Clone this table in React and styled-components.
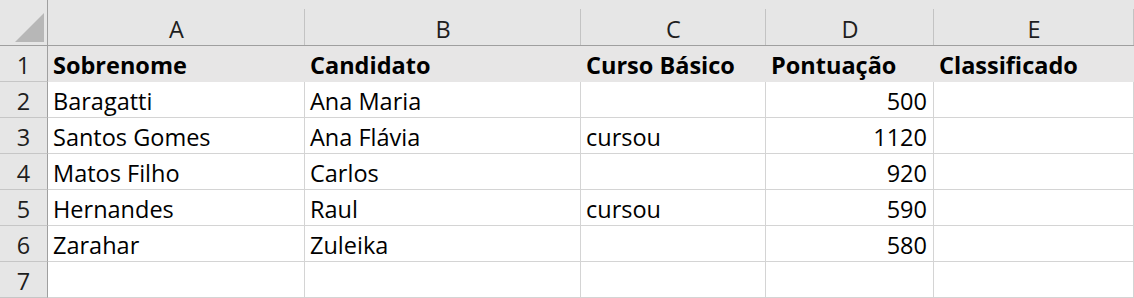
import React from 'react'
import styled, { createGlobalStyle } from 'styled-components'

const GlobalStyle = createGlobalStyle`
  html, body {
    margin: 0;
    padding: 0;
    background: #ffffff;
  }
  body {
    font-family: "Open Sans", "Liberation Sans", sans-serif;
    font-size: 23.5px;
    color: #000;
  }
`

const Sheet = styled.div`
  display: grid;
  grid-template-columns: 48px 257px 276px 185px 168px 1fr;
  grid-auto-rows: 36px;
  grid-template-rows: 46px;
  width: 1134px;
  height: 298px;
  overflow: hidden;
  background: #fff;
`

const Corner = styled.div`
  position: relative;
  background: #e6e6e6;
  border-right: 1px solid #9f9f9f;
  border-bottom: 1px solid #9f9f9f;
  svg {
    position: absolute;
    left: 15px;
    top: 13px;
  }
`

const ColHead = styled.div`
  position: relative;
  background: #e6e6e6;
  border-bottom: 1px solid #9f9f9f;
  display: flex;
  align-items: flex-end;
  justify-content: center;
  padding-bottom: 4px;
  color: #1e1e1e;
  line-height: 1;
  &::after {
    content: '';
    position: absolute;
    right: 0;
    top: 9px;
    bottom: 0;
    width: 1px;
    background: #c3c3c3;
  }
`

const RowHead = styled.div`
  background: #e6e6e6;
  border-right: 1px solid #9f9f9f;
  border-bottom: 1px solid #c6c6c6;
  display: flex;
  align-items: flex-end;
  justify-content: center;
  padding-bottom: 4px;
  color: #1e1e1e;
  line-height: 1;
`

const Cell = styled.div`
  background: ${p => (p.$fill ? '#e7e6e6' : '#fff')};
  border-right: 1px solid ${p => (p.$fill ? '#e7e6e6' : '#d4d4d4')};
  border-bottom: 1px solid ${p => (p.$fill ? '#e7e6e6' : '#d4d4d4')};
  display: flex;
  align-items: flex-end;
  justify-content: ${p => (p.$num ? 'flex-end' : 'flex-start')};
  padding: 0 6px 4px 5px;
  font-weight: ${p => (p.$bold ? 700 : 400)};
  white-space: nowrap;
  overflow: hidden;
  line-height: 1;
`

const cols = ['A', 'B', 'C', 'D', 'E']

const rows = [
  ['Sobrenome', 'Candidato', 'Curso Básico', 'Pontuação', 'Classificado'],
  ['Baragatti', 'Ana Maria', '', 500, ''],
  ['Santos Gomes', 'Ana Flávia', 'cursou', 1120, ''],
  ['Matos Filho', 'Carlos', '', 920, ''],
  ['Hernandes', 'Raul', 'cursou', 590, ''],
  ['Zarahar', 'Zuleika', '', 580, ''],
  ['', '', '', '', ''],
]

export default function App() {
  return (
    <>
      <GlobalStyle />
      <Sheet>
        <Corner>
          <svg width="30" height="30" viewBox="0 0 30 30">
            <polygon points="29,0 29,29 0,29" fill="#b7b7b7" />
          </svg>
        </Corner>
        {cols.map(c => (
          <ColHead key={c}>{c}</ColHead>
        ))}
        {rows.map((r, i) => (
          <React.Fragment key={i}>
            <RowHead>{i + 1}</RowHead>
            {r.map((v, j) => (
              <Cell
                key={j}
                $fill={i === 0}
                $bold={i === 0}
                $num={typeof v === 'number'}
              >
                {v}
              </Cell>
            ))}
          </React.Fragment>
        ))}
      </Sheet>
    </>
  )
}
